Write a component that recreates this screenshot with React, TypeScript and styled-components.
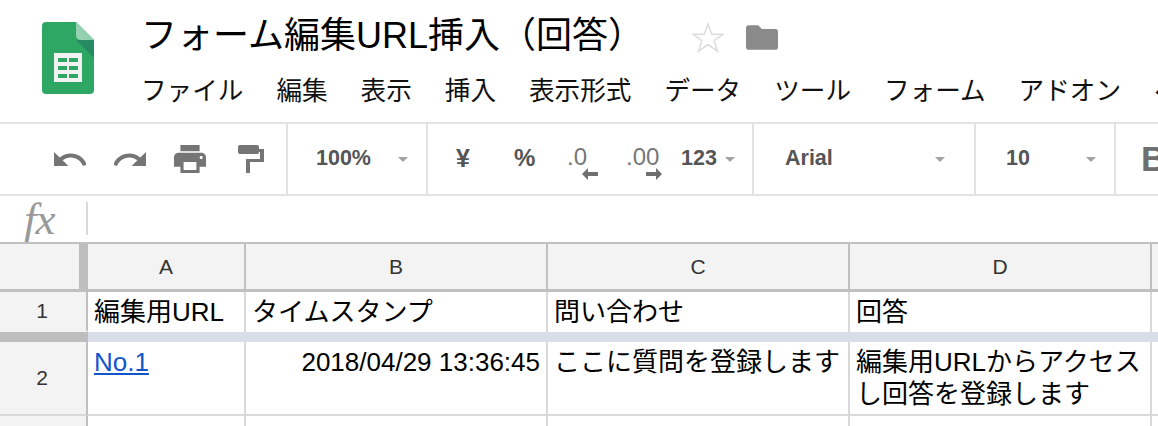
import React from "react";
import styled, { createGlobalStyle } from "styled-components";

const Global = createGlobalStyle`
  html, body { margin: 0; padding: 0; background: #fff; overflow: hidden; }
  body { font-family: "Liberation Sans", "Noto Sans CJK JP", sans-serif; }
`;

const Page = styled.div`
  width: 1158px;
  height: 426px;
  overflow: hidden;
  display: flex;
  flex-direction: column;
`;

const Header = styled.header`
  height: 122px;
  display: flex;
  flex: none;
  overflow: hidden;
`;
const LogoWrap = styled.div`
  width: 141px;
  flex: none;
  padding: 22px 0 0 42px;
  box-sizing: border-box;
`;
const HeaderBody = styled.div`
  display: flex;
  flex-direction: column;
  min-width: 0;
  flex: 1;
`;
const TitleRow = styled.div`
  height: 70px;
  display: flex;
  align-items: center;
  padding-top: 2px;
  box-sizing: border-box;
`;
const Title = styled.h1`
  margin: 0;
  font: 400 36px/44px "Liberation Sans", "Noto Sans CJK JP", sans-serif;
  color: #000;
  white-space: nowrap;
`;
const TitleIcons = styled.div`
  display: flex;
  align-items: center;
  gap: 22px;
  margin-left: 48px;
  margin-top: 2px;
`;
const Menu = styled.nav`
  display: flex;
  white-space: nowrap;
  gap: 33px;
  margin-top: 5px;
`;
const MenuItem = styled.span`
  font: 400 25.600px/32px "Liberation Sans", "Noto Sans CJK JP", sans-serif;
  color: #111;
`;

const Toolbar = styled.div`
  height: 74px;
  flex: none;
  box-sizing: border-box;
  border-top: 2px solid #e2e2e2;
  border-bottom: 2px solid #e2e2e2;
  display: flex;
  overflow: hidden;
`;
const Section = styled.div<{ $w: number; $pad?: number }>`
  width: ${(p) => p.$w}px;
  flex: none;
  box-sizing: border-box;
  border-right: 2px solid #e2e2e2;
  padding-left: ${(p) => p.$pad ?? 0}px;
  display: flex;
  align-items: center;
  position: relative;
`;
const ToolText = styled.span<{ $w?: number; $size?: number }>`
  font: 700 ${(p) => p.$size ?? 21.5}px/26px "Liberation Sans", "Noto Sans CJK JP", sans-serif;
  color: #555;
  width: ${(p) => (p.$w ? `${p.$w}px` : "auto")};
  flex: none;
  white-space: nowrap;
  margin-bottom: 2px;
`;
const Caret = styled.span`
  width: 0;
  height: 0;
  flex: none;
  border-left: 5px solid transparent;
  border-right: 5px solid transparent;
  border-top: 5px solid #a3a3a3;
  margin-top: 0;
`;
const IconRow = styled.div`
  display: flex;
  align-items: center;
  gap: 28px;
`;
const PaintSlot = styled.span`
  display: flex;
  margin-left: 4px;
`;
const DecimalTool = styled.div<{ $w: number }>`
  width: ${(p) => p.$w}px;
  height: 34px;
  flex: none;
  display: flex;
  flex-direction: column;
  margin-top: 8px;
`;
const DecimalText = styled.span`
  font: 400 24px/22px "Liberation Sans", sans-serif;
  color: #777;
`;
const BoldB = styled.span`
  font: 700 35px/36px "Liberation Sans", sans-serif;
  color: #6f6f6f;
  margin-left: 25px;
  align-self: center;
`;

const FormulaBar = styled.div`
  height: 46px;
  flex: none;
  display: flex;
  align-items: flex-start;
`;
const Fx = styled.span`
  width: 86px;
  flex: none;
  box-sizing: border-box;
  padding: 0 0 0 24px;
  font: italic 400 45px/46px "Liberation Serif", serif;
  color: #999;
  letter-spacing: -1px;
`;
const FormulaDivider = styled.span`
  width: 2px;
  height: 33px;
  margin-top: 6px;
  background: #d9d9d9;
`;

const Sheet = styled.div`
  display: grid;
  grid-template-columns: 88px 158px 302px 302px 302px 60px;
  grid-template-rows: 48px 40px 10px 74px 40px;
  border-top: 2px solid #c0c0c0;
  box-sizing: border-box;
  flex: none;
`;
const Corner = styled.div`
  background: #f3f3f3;
  border-bottom: 3px solid #c0c0c0;
  border-right: 9px solid #bdbdbd;
  box-sizing: border-box;
`;
const ColHead = styled.div`
  background: #f3f3f3;
  border-right: 2px solid #c0c0c0;
  border-bottom: 3px solid #c0c0c0;
  box-sizing: border-box;
  display: flex;
  align-items: center;
  justify-content: center;
  font: 400 21px/24px "Liberation Sans", sans-serif;
  color: #333;
`;
const RowHead = styled.div<{ $last?: boolean }>`
  background: #f3f3f3;
  border-right: 2px solid #c0c0c0;
  border-bottom: 2px solid ${(p) => (p.$last ? "#d9d9d9" : "transparent")};
  box-sizing: border-box;
  display: flex;
  align-items: center;
  justify-content: center;
  font: 400 21px/24px "Liberation Sans", sans-serif;
  color: #333;
  padding-right: 2px;
`;
const Cell = styled.div<{ $right?: boolean; $bottom?: boolean }>`
  border-right: 2px solid #d9d9d9;
  border-bottom: ${(p) => (p.$bottom ? "2px solid #d9d9d9" : "none")};
  box-sizing: border-box;
  padding: 4px 6px 0;
  text-align: ${(p) => (p.$right ? "right" : "left")};
  font: 400 26px/32px "Liberation Sans", "Noto Sans CJK JP", sans-serif;
  color: #000;
  overflow: hidden;
`;
const Freeze = styled.div`
  background: #d9dde8;
`;
const FreezeHead = styled.div`
  background: #bdbdbd;
`;
const LinkText = styled.a`
  color: #1155cc;
  text-decoration: underline;
`;
const EmptyRow = styled.div<{ $head?: boolean }>`
  background: ${(p) => (p.$head ? "#f3f3f3" : "#fff")};
  border-right: 2px solid ${(p) => (p.$head ? "#c0c0c0" : "#d9d9d9")};
  box-sizing: border-box;
`;

const SheetsLogo = () => (
  <svg width="52" height="72" viewBox="0 0 52 72">
    <path d="M34 0H4a4 4 0 0 0-4 4v64a4 4 0 0 0 4 4h44a4 4 0 0 0 4-4V18z" fill="#2ea764" />
    <path d="M34 18l18 18V18z" fill="#268a63" />
    <path d="M34 0l18 18H38.500a4.500 4.500 0 0 1-4.500-4.500z" fill="#94d1b0" />
    <path d="M12 31h28v29H12z" fill="#f1f1f1" />
    <path d="M16 36h9v4h-9zM27 36h9v4h-9zM16 44h9v4h-9zM27 44h9v4h-9zM16 52h9v4h-9zM27 52h9v4h-9z" fill="#2ea764" />
  </svg>
);

const Undo = () => (
  <svg width="32" height="14" viewBox="2 7 20 9" preserveAspectRatio="none">
    <path d="M12.500 8c-2.650 0-5.050.990-6.900 2.600L2 7v9h9l-3.620-3.620c1.390-1.160 3.160-1.880 5.120-1.880 3.540 0 6.550 2.310 7.600 5.500l2.370-.780C21.080 11.030 17.150 8 12.500 8z" fill="#757575" />
  </svg>
);
const Redo = () => (
  <svg width="32" height="14" viewBox="2 7 20 9" preserveAspectRatio="none">
    <path d="M18.400 10.600C16.550 8.990 14.150 8 11.500 8c-4.650 0-8.580 3.030-9.960 7.220L3.900 16c1.050-3.190 4.050-5.500 7.600-5.500 1.950 0 3.730.720 5.120 1.880L13 16h9V7l-3.600 3.600z" fill="#757575" />
  </svg>
);
const Print = () => (
  <svg width="32" height="28" viewBox="2 3 20 18" preserveAspectRatio="none">
    <path d="M19 8H5c-1.660 0-3 1.340-3 3v6h4v4h12v-4h4v-6c0-1.660-1.340-3-3-3zm-3 11H8v-5h8v5zm3-7c-.550 0-1-.450-1-1s.450-1 1-1 1 .450 1 1-.450 1-1 1zm-1-9H6v4h12V3z" fill="#757575" />
  </svg>
);
const Paint = () => (
  <svg width="26" height="28" viewBox="0 0 26 28">
    <path d="M2 0h17a2 2 0 0 1 2 2v5a2 2 0 0 1-2 2H2a2 2 0 0 1-2-2V2a2 2 0 0 1 2-2z" fill="#757575" />
    <path d="M21 4h5v13H12v11H8V14h14V7h-1z" fill="#757575" />
  </svg>
);
const Star = () => (
  <svg width="32" height="32" viewBox="0 0 34 32">
    <path d="M17 2l4 11h12l-9.500 7 3.500 11-10-7-10 7 3.500-11L1 13h12z" fill="none" stroke="#dcdcdc" strokeWidth="1.600" />
  </svg>
);
const Folder = () => (
  <svg width="32" height="25" viewBox="0 0 34 26">
    <path d="M3 0h10l4 4h14a3 3 0 0 1 3 3v16a3 3 0 0 1-3 3H3a3 3 0 0 1-3-3V3a3 3 0 0 1 3-3z" fill="#8a8a8a" />
  </svg>
);
const ArrowGlyph = styled.svg<{ $ml: number }>`
  display: block;
  margin-left: ${(p) => p.$ml}px;
`;
const ArrowLeft = () => (
  <ArrowGlyph $ml={15} width="16" height="12" viewBox="0 0 16 12">
    <path d="M0 6l6-6v4h10v4H6v4z" fill="#6f6f6f" />
  </ArrowGlyph>
);
const ArrowRight = () => (
  <ArrowGlyph $ml={20} width="16" height="12" viewBox="0 0 16 12">
    <path d="M16 6l-6-6v4H0v4h10v4z" fill="#6f6f6f" />
  </ArrowGlyph>
);

const menus = ["ファイル", "編集", "表示", "挿入", "表示形式", "データ", "ツール", "フォーム", "アドオン", "ヘルプ"];

export default function App() {
  return (
    <Page>
      <Global />
      <Header>
        <LogoWrap>
          <SheetsLogo />
        </LogoWrap>
        <HeaderBody>
          <TitleRow>
            <Title>フォーム編集URL挿入（回答）</Title>
            <TitleIcons>
              <Star />
              <Folder />
            </TitleIcons>
          </TitleRow>
          <Menu>
            {menus.map((m) => (
              <MenuItem key={m}>{m}</MenuItem>
            ))}
          </Menu>
        </HeaderBody>
      </Header>
      <Toolbar>
        <Section $w={288} $pad={54}>
          <IconRow>
            <Undo />
            <Redo />
            <Print />
            <PaintSlot>
              <Paint />
            </PaintSlot>
          </IconRow>
        </Section>
        <Section $w={140} $pad={28}>
          <ToolText $w={82}>100%</ToolText>
          <Caret />
        </Section>
        <Section $w={326} $pad={28}>
          <ToolText $w={58} $size={25}>¥</ToolText>
          <ToolText $w={53} $size={24}>%</ToolText>
          <DecimalTool $w={59}>
            <DecimalText>.0</DecimalText>
            <ArrowLeft />
          </DecimalTool>
          <DecimalTool $w={55}>
            <DecimalText>.00</DecimalText>
            <ArrowRight />
          </DecimalTool>
          <ToolText $w={44}>123</ToolText>
          <Caret />
        </Section>
        <Section $w={222} $pad={31}>
          <ToolText $w={150}>Arial</ToolText>
          <Caret />
        </Section>
        <Section $w={140} $pad={30}>
          <ToolText $w={80}>10</ToolText>
          <Caret />
        </Section>
        <BoldB>B</BoldB>
      </Toolbar>
      <FormulaBar>
        <Fx>fx</Fx>
        <FormulaDivider />
      </FormulaBar>
      <Sheet>
        <Corner />
        <ColHead>A</ColHead>
        <ColHead>B</ColHead>
        <ColHead>C</ColHead>
        <ColHead>D</ColHead>
        <ColHead />

        <RowHead>1</RowHead>
        <Cell>編集用URL</Cell>
        <Cell>タイムスタンプ</Cell>
        <Cell>問い合わせ</Cell>
        <Cell>回答</Cell>
        <Cell />

        <FreezeHead />
        <Freeze />
        <Freeze />
        <Freeze />
        <Freeze />
        <Freeze />

        <RowHead $last>2</RowHead>
        <Cell $bottom>
          <LinkText>No.1</LinkText>
        </Cell>
        <Cell $bottom $right>
          2018/04/29 13:36:45
        </Cell>
        <Cell $bottom>ここに質問を登録します</Cell>
        <Cell $bottom>編集用URLからアクセスし回答を登録します</Cell>
        <Cell $bottom />

        <EmptyRow $head />
        <EmptyRow />
        <EmptyRow />
        <EmptyRow />
        <EmptyRow />
        <EmptyRow />
      </Sheet>
    </Page>
  );
}
